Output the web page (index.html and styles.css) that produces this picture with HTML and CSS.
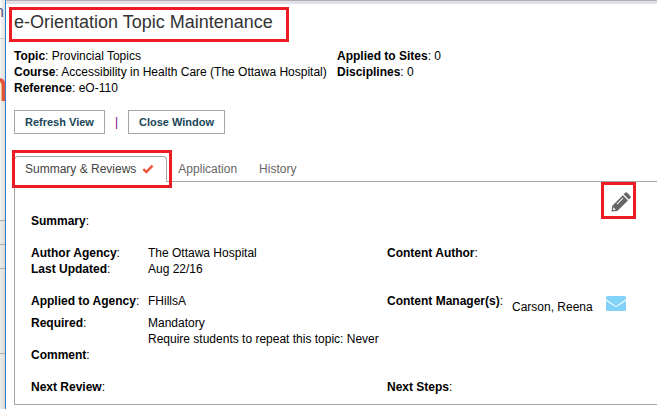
FILE: index.html
```html
<!DOCTYPE html>
<html lang="en">
<head>
<meta charset="UTF-8">
<title>e-Orientation Topic Maintenance</title>
<link rel="stylesheet" href="styles.css">
</head>
<body>
  <div class="backdrop">
    <div class="strip strip-top"><span class="strip-text">n</span></div>
    <div class="strip strip-logo"><span class="strip-logo-text">n</span></div>
    <div class="strip strip-row"></div>
    <div class="strip strip-row"></div>
    <div class="strip strip-list"></div>
  </div>

  <main class="window">
    <h1 class="title highlight">e-Orientation Topic Maintenance</h1>

    <div class="info">
      <div>
        <div><b>Topic</b>: Provincial Topics</div>
        <div><b>Course</b>: Accessibility in Health Care (The Ottawa Hospital)</div>
        <div><b>Reference</b>: eO-110</div>
      </div>
      <div>
        <div><b>Applied to Sites</b>: 0</div>
        <div><b>Disciplines</b>: 0</div>
      </div>
    </div>

    <div class="actions">
      <button class="btn" type="button">Refresh View</button>
      <span class="divider">|</span>
      <button class="btn" type="button">Close Window</button>
    </div>

    <nav class="tabs">
      <a class="tab active" href="#summary">Summary &amp; Reviews
        <svg class="check" viewBox="0 0 12 10"><path d="M1.4 5.2 4.3 8 10.6 1.6" fill="none" stroke="#ee5238" stroke-width="2.4"/></svg>
      </a>
      <a class="tab" href="#application">Application</a>
      <a class="tab" href="#history">History</a>
    </nav>

    <section class="panel" id="summary">
      <button class="edit highlight" type="button" aria-label="Edit">
        <svg class="pencil" viewBox="0 0 20 20">
          <path d="M14.2.8q1-.9 2-.1l3.1 3.2q.9 1 0 2l-1.5 1.5-5.1-5.1zM11.8 3.2l5.2 5.2L6.3 19l-5.8.5.8-5.8z" fill="#666"/>
          <path d="m5.6 11.8 6-6 .7.7-6 6z" fill="#fff"/>
          <path d="m2.3 15.3 2.4 2.4-2.2.3-.5-.5z" fill="#fff"/>
        </svg>
      </button>

      <dl class="fields">
        <div class="row row-summary">
          <dt><b>Summary</b>:</dt><dd></dd>
        </div>
        <div class="row">
          <dt><b>Author Agency</b>:</dt><dd>The Ottawa Hospital</dd>
          <dt><b>Content Author</b>:</dt><dd></dd>
        </div>
        <div class="row row-gap">
          <dt><b>Last Updated</b>:</dt><dd>Aug 22/16</dd>
        </div>
        <div class="row">
          <dt><b>Applied to Agency</b>:</dt><dd>FHillsA</dd>
          <dt><b>Content Manager(s)</b>:</dt>
          <dd class="manager">Carson, Reena
            <a href="#mail" aria-label="Send mail"><svg class="mail" viewBox="0 0 20 15">
              <rect width="20" height="15" rx="1.5" fill="#82d2fa"/>
              <path d="M0 3.7 8 9.6q2 1.4 4 0l8-5.9" fill="none" stroke="#fff" stroke-width="1.1"/>
            </svg></a>
          </dd>
        </div>
        <div class="row">
          <dt><b>Required</b>:</dt><dd>Mandatory<br>Require students to repeat this topic: Never</dd>
        </div>
        <div class="row row-gap">
          <dt><b>Comment</b>:</dt><dd></dd>
        </div>
        <div class="row">
          <dt><b>Next Review</b>:</dt><dd></dd>
          <dt><b>Next Steps</b>:</dt><dd></dd>
        </div>
      </dl>
    </section>
  </main>
</body>
</html>
```

FILE: styles.css
```css
* {
  box-sizing: border-box;
}

body {
  margin: 0;
  min-height: 100vh;
  display: flex;
  overflow-x: hidden;
  font: 12px/16px "Liberation Sans", Arial, sans-serif;
  color: #000;
  background: #fff;
}

/* page showing behind the popup window */
.backdrop {
  flex: 0 0 5px;
  overflow: hidden;
  background: linear-gradient(90deg, #ececec, #dadada);
}

.strip {
  display: flex;
  justify-content: flex-end;
  border-bottom: 1px solid #aaa;
}

.strip-top {
  height: 39px;
  padding: 4px 1px 0 0;
  border-color: #ccc;
  background: linear-gradient(90deg, #fafafa, #e2e2e2);
}

.strip-text {
  font-size: 16px;
  color: #4d5a80;
}

.strip-logo {
  height: 182px;
  padding-top: 40px;
  background: linear-gradient(90deg, #f4f4f4, #dedede);
}

.strip-logo-text {
  margin-right: -3px;
  font-size: 42px;
  color: #e2553a;
}

.strip-row {
  height: 24px;
}

.strip-list {
  height: 85px;
}

.window {
  flex: 1;
  min-width: 0;
  padding: 3px 0 4px 8px;
  border-left: 1px solid #2f7fc4;
  border-top: 1px solid #b0b0b0;
  box-shadow: inset 0 3px #e2dfe8;
}

.highlight {
  border: 3px solid #ed1c24;
}

.title {
  width: fit-content;
  margin: 3px 0 6px -5px;
  padding: 0 13px 5px 2px;
  font-size: 18px;
  font-weight: normal;
  line-height: 24px;
  color: #333;
}

.info {
  display: grid;
  grid-template-columns: 323px 1fr;
  white-space: nowrap;
}

.actions {
  display: flex;
  align-items: center;
  gap: 10px;
  margin-top: 14px;
}

.btn {
  height: 24px;
  padding: 0 10px;
  border: 1px solid #a6a6a6;
  background: #fff;
  font: bold 11px/16px "Liberation Sans", Arial, sans-serif;
  color: #1a4557;
}

.divider {
  color: #800080;
}

.tabs {
  display: flex;
  margin-top: 22px;
}

.tab {
  display: flex;
  align-items: center;
  height: 25px;
  padding: 0 11px;
  color: #666;
  text-decoration: none;
}

.tab.active {
  position: relative;
  z-index: 1;
  gap: 6px;
  height: 26px;
  margin-bottom: -1px;
  padding: 0 12px 2px 10px;
  border: 1px solid #a6a6a6;
  border-bottom: 0;
  border-radius: 4px 4px 0 0;
  background: #fff;
  color: #444;
}

.tab.active::after {
  content: "";
  position: absolute;
  inset: -7px -6px -6px -3px;
  border: 3px solid #ed1c24;
}

.check {
  width: 12px;
  height: 10px;
}

.panel {
  position: relative;
  padding: 31px 0 9px 16px;
  border: 1px solid #a6a6a6;
  border-right: 0;
}

.edit {
  position: absolute;
  top: 0;
  right: 21px;
  width: 35px;
  height: 37px;
  padding: 2px 0 0 4px;
  background: none;
}

.pencil {
  display: block;
  width: 20px;
  height: 20px;
  margin: auto;
}

.fields {
  margin: 0;
}

.row {
  display: grid;
  grid-template-columns: 117px 239px 125px 1fr;
  white-space: nowrap;
}

.row dd {
  margin: 0;
}

.row-summary,
.row-gap {
  margin-bottom: 16px;
}

.manager {
  display: flex;
  gap: 13px;
  padding-top: 6px;
}

.mail {
  display: block;
  width: 20px;
  height: 15px;
  margin-top: -3px;
}
```
